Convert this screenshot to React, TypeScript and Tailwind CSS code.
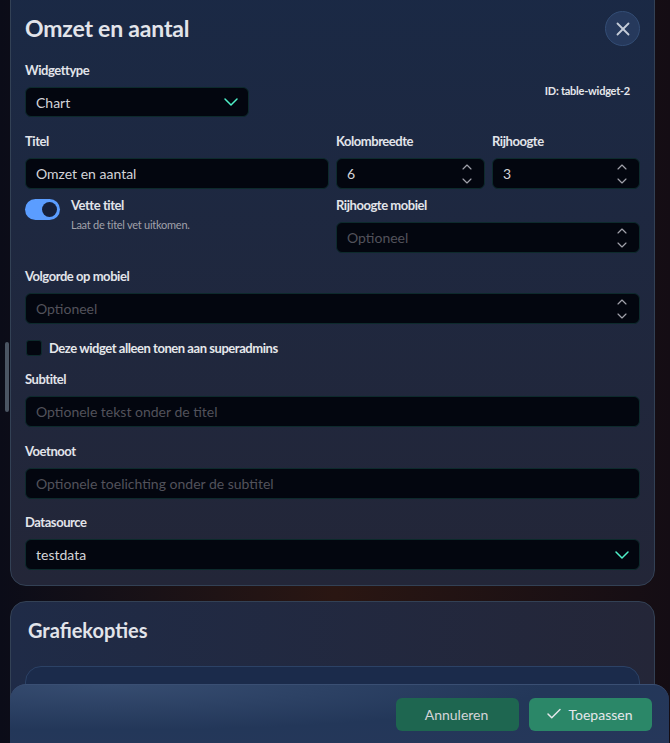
import React from 'react';
import { ChevronDown, ChevronUp, Check, X } from 'lucide-react';

const fieldClass =
  'flex items-center rounded-md border border-[#0d2a2c] bg-[#03060f] pl-[10px] text-[14px]';

const Label: React.FC<{ children: React.ReactNode; className?: string }> = ({ children, className }) => (
  <div className={`h-[18px] text-[13px] font-bold leading-[18px] tracking-[-0.45px] text-[#e2e4ea] ${className ?? 'mb-[8px]'}`}>
    {children}
  </div>
);

const Stepper = () => (
  <div className="flex flex-col items-center text-[#a1a1aa]">
    <ChevronUp size={16} strokeWidth={1.75} />
    <ChevronDown size={16} strokeWidth={1.75} className="-mt-[2px]" />
  </div>
);

const NumberField: React.FC<{ value?: string }> = ({ value }) => (
  <div className={`${fieldClass} h-[31px] justify-between pr-[9px]`}>
    <span className={value ? 'text-[#d4d4d8]' : 'text-[#52525b]'}>{value ?? 'Optioneel'}</span>
    <Stepper />
  </div>
);

const TextField: React.FC<{ placeholder?: string; value?: string }> = ({ placeholder, value }) => (
  <div className={`${fieldClass} h-[31px]`}>
    <span className={value ? 'text-[#d4d4d8]' : 'text-[#52525b]'}>{value ?? placeholder}</span>
  </div>
);

const SelectField: React.FC<{ value: string; className: string }> = ({ value, className }) => (
  <div className={`${fieldClass} justify-between pr-[5px] ${className}`}>
    <span className="text-[#d4d4d8]">{value}</span>
    <ChevronDown size={24} strokeWidth={1.5} className="text-[#4ff0c8]" />
  </div>
);

export default function App() {
  return (
    <div
      className="relative h-[743px] w-[670px] overflow-hidden bg-gradient-to-r from-[#0b0c18] via-[#2a1612] to-[#140d14] pl-[10px] pr-[15px]"
      style={{ fontFamily: 'Lato, "Open Sans", sans-serif' }}
    >
      {/* Scrollbar */}
      <div className="absolute left-[5px] top-[342px] h-[70px] w-[4px] rounded-full bg-[#4b5563]" />

      {/* Widget card */}
      <div className="-mt-4 h-[602px] rounded-2xl border border-[#334155] bg-gradient-to-b from-[#1a2945] to-[#232638] px-[14px] pt-[26px]">
        <div className="flex h-[35px] items-center justify-between">
          <h2 className="text-[23px] font-bold tracking-[-0.2px] text-[#e2e4ea]">Omzet en aantal</h2>
          <button className="flex h-[35px] w-[35px] items-center justify-center rounded-full border border-[#334d75] bg-[#26395c] text-[#c5ccd8]">
            <X size={22} strokeWidth={2} />
          </button>
        </div>

        <div className="mt-[15px] flex items-start justify-between">
          <div className="w-[224px]">
            <Label className="mb-[8px]">Widgettype</Label>
            <SelectField value="Chart" className="h-[30px]" />
          </div>
          <div className="pr-[10px] pt-[22px] text-[11px] font-bold tracking-[-0.25px] text-[#e5e7eb]">ID: table-widget-2</div>
        </div>

        <div className="mt-[15px] grid grid-cols-[304px_149px_148px] gap-x-[7px]">
          <div>
            <Label>Titel</Label>
            <TextField value="Omzet en aantal" />
          </div>
          <div>
            <Label>Kolombreedte</Label>
            <NumberField value="6" />
          </div>
          <div>
            <Label>Rijhoogte</Label>
            <NumberField value="3" />
          </div>

          <div className="mt-[10px] flex items-start gap-[11px]">
            <div className="flex h-[21px] w-[35px] items-center justify-end rounded-full bg-[#5b9dff] pr-[3px]">
              <div className="h-[15px] w-[15px] rounded-full bg-[#16203a]" />
            </div>
            <div>
              <div className="text-[13px] font-bold leading-[13px] tracking-[-0.45px] text-[#e2e4ea]">Vette titel</div>
              <div className="mt-[6px] text-[11px] leading-[13px] tracking-[-0.25px] text-[#a1a1aa]">Laat de titel vet uitkomen.</div>
            </div>
          </div>
          <div className="col-span-2 mt-[7px]">
            <Label>Rijhoogte mobiel</Label>
            <NumberField />
          </div>
        </div>

        <div className="mt-[14px]">
          <Label>Volgorde op mobiel</Label>
          <NumberField />
        </div>

        <div className="mt-[16px] flex items-center gap-[7px] pl-px">
          <div className="h-[16px] w-[16px] rounded-[3px] border border-[#0d2a2c] bg-[#03060f]" />
          <span className="text-[13px] font-bold leading-[16px] tracking-[-0.45px] text-[#e5e7eb]">Deze widget alleen tonen aan superadmins</span>
        </div>

        <div className="mt-[14px]">
          <Label>Subtitel</Label>
          <TextField placeholder="Optionele tekst onder de titel" />
        </div>

        <div className="mt-[15px]">
          <Label>Voetnoot</Label>
          <TextField placeholder="Optionele toelichting onder de subtitel" />
        </div>

        <div className="mt-[14px]">
          <Label>Datasource</Label>
          <SelectField value="testdata" className="h-[31px]" />
        </div>
      </div>

      {/* Grafiekopties card */}
      <div className="mt-[15px] h-[200px] rounded-2xl border border-[#334155] bg-gradient-to-r from-[#1f2b47] to-[#242638] px-[14px] pt-[13px]">
        <h2 className="pl-[3px] text-[20px] font-bold text-[#e2e4ea]">Grafiekopties</h2>
        <div className="mt-[21px] h-[100px] rounded-2xl border border-[#2c4266] bg-[#1b2b4b]" />
      </div>

      {/* Footer */}
      <div className="absolute bottom-0 left-[10px] right-[1px] flex h-[59px] items-center justify-end gap-[10px] rounded-t-2xl border-t border-[#3a4f73] bg-[radial-gradient(ellipse_at_15%_0%,#364c70,#233759_55%,#26375a)] pr-[17px]">
        <button className="h-[33px] w-[123px] rounded-md bg-[#1e6650] pr-[2px] text-[14px] text-[#d4d4d8]">Annuleren</button>
        <button className="flex h-[33px] w-[123px] items-center justify-center gap-[5px] rounded-md bg-[#2b8768] pr-[3px] text-[14px] text-[#e5e7eb]">
          <Check size={18} strokeWidth={2} />
          Toepassen
        </button>
      </div>
    </div>
  );
}
